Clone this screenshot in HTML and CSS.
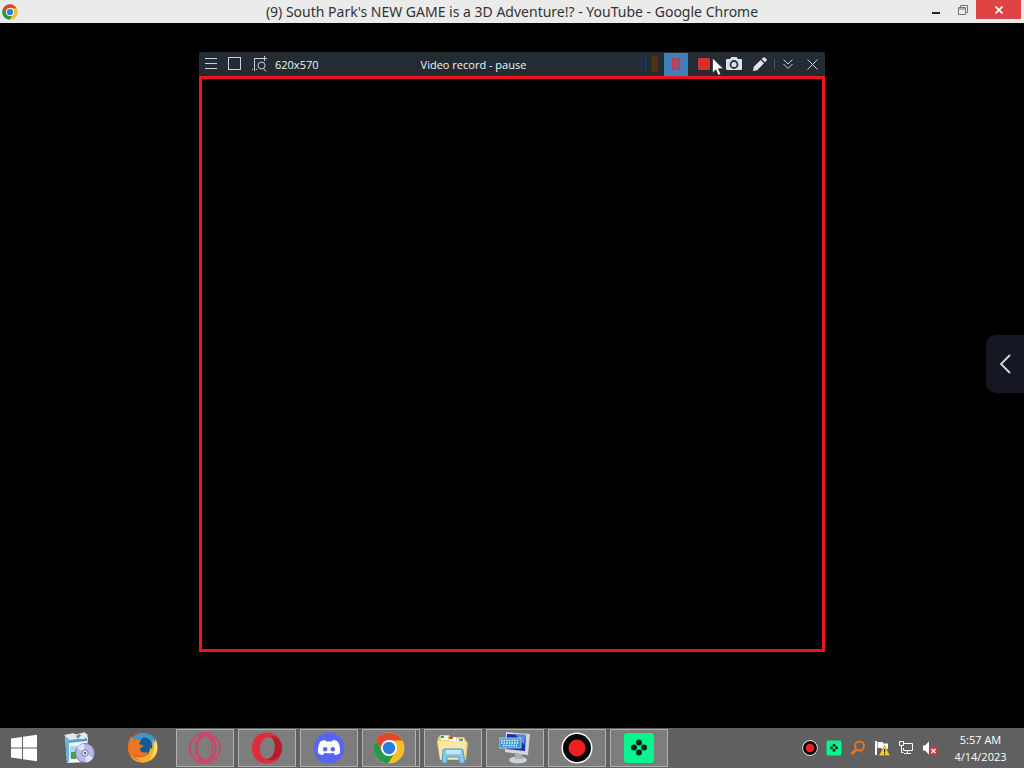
FILE: index.html
```html
<!DOCTYPE html>
<html lang="en">
<head>
<meta charset="utf-8">
<title>(9) South Park's NEW GAME is a 3D Adventure!? - YouTube - Google Chrome</title>
<link rel="stylesheet" href="styles.css">
</head>
<body>
<svg class="defs" aria-hidden="true">
  <defs>
    <symbol id="chrome" viewBox="0 0 32 32">
      <circle cx="16" cy="16" r="15.500" fill="#f6bf26"/>
      <path d="M2.600 8.200A15.500 15.500 0 0 1 29.400 8.500H16L9.500 19.500z" fill="#e04632"/>
      <path d="M2.600 8.200A15.500 15.500 0 0 0 15 31.500L22.500 19.700 9.500 19.700z" fill="#279847"/>
      <circle cx="16" cy="16" r="8" fill="#fff"/>
      <circle cx="16" cy="16" r="6.200" fill="#2b7be0"/>
    </symbol>
    <symbol id="record" viewBox="0 0 32 32">
      <circle cx="16" cy="16" r="15.500" fill="#fff"/>
      <circle cx="16" cy="16" r="14" fill="#050505"/>
      <circle cx="16" cy="16" r="8.500" fill="#ed2024"/>
    </symbol>
    <symbol id="gamepad" viewBox="0 0 32 32">
      <rect x="1" y="1" width="30" height="30" rx="3" fill="#07f58e"/>
      <g fill="#06251a"><circle cx="16" cy="10.500" r="3"/><circle cx="16" cy="20.500" r="3"/><circle cx="11" cy="15.500" r="3"/><circle cx="21" cy="15.500" r="3"/></g>
    </symbol>
  </defs>
</svg>
<div class="desktop">
  <header class="titlebar">
    <svg class="title-icon" aria-hidden="true"><use href="#chrome"/></svg>
    <h1 class="title">(9) South Park's NEW GAME is a 3D Adventure!? - YouTube - Google Chrome</h1>
    <div class="window-controls">
      <button class="win-btn" aria-label="Minimize"><svg width="10" height="12" viewBox="0 0 10 12"><path d="M1 8h8v2H1z" fill="#222"/></svg></button>
      <button class="win-btn" aria-label="Restore"><svg width="10" height="12" viewBox="0 0 10 12" fill="none" stroke="#777"><path d="M.5 3.500h7v7h-7zM.5 5h7M2.500 3V1.500h7v7H8"/></svg></button>
      <button class="win-btn win-close" aria-label="Close"><svg width="8" height="8" viewBox="0 0 8 8"><path d="M.5.5l7 7M7.500.5l-7 7" stroke="#fff" stroke-width="1.600"/></svg></button>
    </div>
  </header>

  <main class="stage">
    <section class="recorder">
      <div class="rec-bar">
        <div class="rec-left">
          <button class="rec-btn" aria-label="Menu"><svg width="14" height="14" viewBox="0 0 14 14"><path d="M1 1.500h12M1 6.500h12M1 11.500h12" stroke="#ccd2d7"/></svg></button>
          <button class="rec-btn" aria-label="Full screen"><svg width="14" height="14" viewBox="0 0 14 14"><rect x=".5" y=".5" width="12" height="12" fill="none" stroke="#ccd2d7"/></svg></button>
          <button class="rec-btn" aria-label="Select area"><svg width="16" height="16" viewBox="0 0 16 16" fill="none" stroke="#ccd2d7"><path d="M3.500 15V2.500H12M13.500 0v5M11 2.500h5M1 13.500h1M5 13.500h1"/><circle cx="10.500" cy="9.500" r="3.500"/><path d="M12.500 12.500l2.500 3"/></svg></button>
          <span class="rec-size">620x570</span>
        </div>
        <span class="rec-status">Video record - pause</span>
        <div class="rec-right">
          <svg class="meter" width="20" height="16" viewBox="0 0 20 16" aria-hidden="true"><path d="M1.500.5h4v15h-4z" fill="#192c43" stroke="#223b58"/><path d="M12.500.5h5v15h-5z" fill="#493018" stroke="#553817"/></svg>
          <button class="rec-btn rec-pause" aria-label="Pause"><svg width="8" height="12" viewBox="0 0 8 12"><path d="M0 0h3.500v12H0zM4.500 0H8v12H4.500z" fill="#c43b4d"/></svg></button>
          <button class="rec-btn rec-stop" aria-label="Stop"><svg width="12" height="12" viewBox="0 0 12 12"><path d="M0 0h12v12H0z" fill="#dc2f29"/></svg></button>
          <button class="rec-btn rec-camera" aria-label="Screenshot"><svg width="16" height="14" viewBox="0 0 16 14"><path d="M1 2h3l1.500-2h5L12 2h3q1 0 1 1v9q0 1-1 1H1q-1 0-1-1V3q0-1 1-1z" fill="#dce1eb"/><circle cx="8" cy="7.500" r="3.500" fill="none" stroke="#27323a" stroke-width="1.800"/></svg></button>
          <button class="rec-btn rec-draw" aria-label="Draw"><svg width="14" height="14" viewBox="0 0 14 14"><path d="M0 14l.7-4.200L7.700 3 11 6.300 4.200 13.300zM8.700 2L10 .7q1-1 2 0l1.300 1.300q1 1 0 2L12 5.300z" fill="#e3e5f0"/></svg></button>
          <span class="rec-sep"></span>
          <button class="rec-btn" aria-label="Collapse"><svg width="10" height="12" viewBox="0 0 10 12"><path d="M.5 1.500L5 6l4.500-4.500M.5 6L5 10.500 9.500 6" fill="none" stroke="#ccd2d7"/></svg></button>
          <button class="rec-btn" aria-label="Close recorder"><svg width="11" height="11" viewBox="0 0 11 11"><path d="M.5.5l10 10M10.500.5l-10 10" stroke="#ccd2d7"/></svg></button>
        </div>
        <svg class="cursor" width="12" height="19" viewBox="0 0 12 19" aria-hidden="true"><path d="M.5 1v15l3.300-3.300 2.400 5.600 2.600-1.100-2.400-5.500h5z" fill="#fff" stroke="#222" stroke-width=".7"/></svg>
      </div>
      <div class="rec-frame"></div>
    </section>
    <button class="side-tab" aria-label="Open side panel"><svg width="12" height="22" viewBox="0 0 12 22"><path d="M11 2L2 11l9 9" fill="none" stroke="#d6d7dc" stroke-width="1.800"/></svg></button>
  </main>

  <footer class="taskbar">
    <button class="start" aria-label="Start"><svg width="28" height="28" viewBox="0 0 28 28" fill="#fff"><path d="M1 4.500l11-1.500v10.500H1zM13 2.800L27 .7v12.800H13zM1 14.500h11V25L1 23.500zM13 14.500h14v12.800l-14-2.100z"/></svg></button>
    <nav class="apps" aria-label="Applications">
      <button class="pin" aria-label="Installer"><svg class="app-icon" viewBox="0 0 32 32"><path d="M2 4l18-3 5 4-2 25L4 31z" fill="#eef3f6"/><path d="M2 4l4 3v23l-2 1z" fill="#72afd8"/><path d="M6 8l18-2v3L6 11z" fill="#5c9bcd"/><path d="M1 3l10-2 2 4 8-5 4 3-4 4H6z" fill="#dce9f1"/><path d="M13 4l3-2 2 1-3 4z" fill="#7b8798"/><path d="M7 14h12v12H7z" fill="#a7d8e8"/><path d="M8 20h5v7H8z" fill="#45a44b"/><path d="M13 16h5v10h-5z" fill="#eac25a"/><circle cx="22" cy="21" r="9.500" fill="#b8b8e9" stroke="#7477af"/><path d="M22 21l-8-5a9.500 9.500 0 0 1 7-4.500zM22 21l8 5a9.500 9.500 0 0 1-7 4.500z" fill="#e1e0fa"/><circle cx="22" cy="21" r="3.200" fill="#edf1ff" stroke="#7176a9"/><circle cx="22" cy="21" r="1.300" fill="#596080"/></svg></button>
      <button class="pin" aria-label="Firefox"><svg class="app-icon" viewBox="0 0 32 32"><circle cx="16" cy="16" r="15" fill="#e66322"/><path d="M6 6Q10 1 17 1.200C26 1.500 31 8 30.500 16L25 23 15 21 7 14z" fill="#3d97cb"/><path d="M15 6c4-2 11 2 10 10l-4 6-6-1-4-7z" fill="#14598f"/><path d="M28 6c4 8 3 17-4 22-8 5-18 2-21-5 10 5 20 2 20-7l2 1c1-4 1-6 0-9l3 2z" fill="#f6ad32"/><path d="M29 9c3 8 0 16-7 19 4-5 6-10 5-16z" fill="#fbe368"/><path d="M4 4l3 4 6 0-1 4 5 2-5 3c1 4 5 4 9 3-3 5-11 5-14 0 0 4 3 8 8 9C5 29-2 19 2 9z" fill="#ee7426"/></svg></button>
      <button class="task" aria-label="Opera GX"><svg class="app-icon" viewBox="0 0 32 32" fill="none" stroke="#e03a66" stroke-width="1.500"><circle cx="16" cy="16" r="15"/><ellipse cx="16" cy="16" rx="8" ry="12.500"/><path d="M20 1.500C2 1 2 31 20 30.500M20 3.500c9 5 9 20 0 25"/></svg></button>
      <button class="task" aria-label="Opera"><svg class="app-icon" viewBox="0 0 32 32"><path fill-rule="evenodd" d="M16 .5C7 .5 1 7 1 16s6 15.500 15 15.500S31 25 31 16 25 .5 16 .5zM18 5c4 0 6 5 6 10s-3 12-8 12-7-5-7-11S13 5 18 5z" fill="#e22b3a"/><path d="M18 5c4 0 6 5 6 10s-3 12-8 12q-3 0-5-3c8 8 20 4 20-8 0-9-7-14-13-11z" fill="#b71d2c"/></svg></button>
      <button class="task" aria-label="Discord"><svg class="app-icon" viewBox="0 0 32 32"><circle cx="16" cy="16" r="15.500" fill="#5865f2"/><path fill-rule="evenodd" d="M12 8l1 1.500h6L20 8c3 .3 4 1 5 2 2 4 2.500 7 2 11-2 1.500-4 2-5 2l-1.500-2.300q-4.500 1.300-9 0L10 23c-2 0-4-1-5-2-.3-4 0-7 2-11 1-1 3-1.700 5-2zm.2 7c-3 0-3 4.500 0 4.500s3-4.500 0-4.500zm7.600 0c-3 0-3 4.500 0 4.500s3-4.500 0-4.500z" fill="#fff"/></svg></button>
      <button class="task task-stack" aria-label="Google Chrome"><svg class="app-icon"><use href="#chrome"/></svg></button>
      <button class="task" aria-label="File Explorer"><svg class="app-icon" viewBox="0 0 32 32"><path d="M1 6l2-3h9l2 3h2l2-1h9l2 4 2 2-2 17H3L0 10z" fill="#e5cf78"/><path d="M4 4h7v4H4zM12 5h7v4h-7zM20 7h7v3h-7z" fill="#fff"/><path d="M4 4h3v2H4z" fill="#35a94a"/><path d="M12 5h4v2h-4z" fill="#e24628"/><path d="M22 7h4v2h-4z" fill="#4d94cf"/><path d="M1 9h28l-1 18H3z" fill="#f7e9a4"/><path d="M5 31l1-13q0-1 2-1h16q2 0 2 1l2 13h-6v-6H10v6z" fill="#86c6ea" stroke="#5299c6"/><path d="M9 18h15v4H9z" fill="#c2e7f7"/></svg></button>
      <button class="task" aria-label="On-screen keyboard"><svg class="app-icon" viewBox="0 0 32 32"><ellipse cx="19" cy="28" rx="9" ry="3.500" fill="#cfd2d4"/><path d="M16 22h7l1 5h-8z" fill="#a7adb2"/><path d="M7 0l24 2-2 21-23-3z" fill="#d2d7dc"/><path d="M8 2l19 1-1 16-19-2z" fill="#1634a5"/><path d="M16 2l11 1-2 10z" fill="#6187d9"/><path d="M0 6h22v10H0z" fill="#3a96d4" stroke="#d2edfc" stroke-width=".7"/><path d="M2 8.500h18M2 11h18M4 13.500h14" stroke="#e4f5fc" stroke-width="1.300" stroke-dasharray="1.600 1"/></svg></button>
      <button class="task" aria-label="Screen recorder"><svg class="app-icon"><use href="#record"/></svg></button>
      <button class="task" aria-label="Game launcher"><svg class="app-icon"><use href="#gamepad"/></svg></button>
    </nav>
    <div class="tray">
      <button class="tray-btn" aria-label="Recorder"><svg class="tray-icon"><use href="#record"/></svg></button>
      <button class="tray-btn" aria-label="Games"><svg class="tray-icon"><use href="#gamepad"/></svg></button>
      <button class="tray-btn" aria-label="Search"><svg class="tray-icon" viewBox="0 0 16 16" fill="none" stroke="#e9741b"><circle cx="9.500" cy="6" r="4.500" stroke-width="2"/><path d="M6.500 9.500L1.500 14" stroke-width="3"/><path d="M10 11.500l4 1" stroke="#b9601f"/></svg></button>
      <button class="tray-btn" aria-label="Action Center"><svg class="tray-icon" viewBox="0 0 16 16"><path d="M1 1h2v14H1zM3.500 2h5l1 1.500H14V9H8L7 8H3.500z" fill="#fff"/><path d="M10.500 5.500L16 15.500H5z" fill="#f4cf2b" stroke="#8d7818" stroke-width=".5"/><path d="M10 9h1.200v3.500H10zM10 13.300h1.200v1.200H10z" fill="#222"/></svg></button>
      <button class="tray-btn" aria-label="Network"><svg class="tray-icon" viewBox="0 0 16 16" fill="none" stroke="#fff"><path d="M6 3.500h8.500v7H5.500V8M9.500 11v2.500M6 13.500h7M1.500 1.500h4v4h-4zM3.500 6v6.500h2"/></svg></button>
      <button class="tray-btn" aria-label="Volume muted"><svg class="tray-icon" viewBox="0 0 16 16"><path d="M1 5.500h2l4-4v13l-4-4H1z" fill="#fff"/><circle cx="11.500" cy="11" r="4.500" fill="#d5353b"/><path d="M9.500 9l4 4M13.500 9l-4 4" stroke="#fff" stroke-width="1.300"/></svg></button>
    </div>
    <time class="clock" datetime="2023-04-14T05:57"><span>5:57 AM</span><span>4/14/2023</span></time>
  </footer>
</div>
</body>
</html>
```
FILE: styles.css
```css
* {
  box-sizing: border-box;
}

body {
  margin: 0;
  background: #000;
  font-family: "Open Sans", "Noto Sans", sans-serif;
}

button {
  display: flex;
  align-items: center;
  justify-content: center;
  padding: 0;
  border: 0;
  background: none;
  font: inherit;
}

svg {
  display: block;
  flex: none;
}

.defs {
  position: absolute;
  width: 0;
  height: 0;
}

.desktop {
  display: flex;
  flex-direction: column;
  min-height: 100vh;
}

/* Browser title bar */
.titlebar {
  display: grid;
  grid-template-columns: 1fr auto 1fr;
  align-items: center;
  height: 23px;
  background: #ebebeb;
}

.title-icon {
  width: 16px;
  height: 16px;
  margin-left: 2px;
}

.title {
  margin: 0;
  color: #333;
  font-family: "Noto Sans", "Open Sans", sans-serif;
  font-size: 14px;
  font-weight: 400;
  line-height: 23px;
  white-space: nowrap;
}

.window-controls {
  display: flex;
  align-self: start;
  justify-content: flex-end;
  padding-right: 3px;
}

.win-btn {
  width: 27px;
  height: 19px;
}

.win-close {
  width: 45px;
  background: #e04343;
}

/* Black video area holding the recorder window */
.stage {
  position: relative;
  display: flex;
  flex: 1;
  justify-content: center;
  padding: 29px 0 76px;
}

.recorder {
  display: flex;
  flex-direction: column;
  width: 626px;
}

.rec-bar {
  position: relative;
  display: grid;
  grid-template-columns: 1fr auto 1fr;
  align-items: center;
  height: 24px;
  padding-right: 1px;
  background: #232c33;
  color: #f2f4f5;
  font-size: 11px;
}

.rec-left,
.rec-right {
  display: flex;
  align-items: center;
}

.rec-right {
  justify-content: flex-end;
}

.rec-btn {
  width: 24px;
  height: 23px;
}

.rec-size {
  margin-left: 4px;
}

.rec-status {
  padding-right: 76px;
}

.rec-pause {
  margin-left: 4px;
  background: #427fbd;
}

.rec-stop {
  width: 32px;
}

.rec-camera {
  width: 28px;
}

.rec-sep {
  width: 1px;
  height: 10px;
  margin: 0 1px 0 2px;
  background: #4a545b;
}

.cursor {
  position: absolute;
  top: 5px;
  right: 101px;
}

.rec-frame {
  flex: 1;
  border: 3px solid #ed151b;
}

.side-tab {
  position: absolute;
  top: 312px;
  right: 0;
  width: 38px;
  height: 58px;
  border-radius: 10px 0 0 10px;
  background: #151723;
}

/* Taskbar */
.taskbar {
  display: flex;
  align-items: center;
  height: 40px;
  background: #606060;
}

.start {
  width: 48px;
  height: 40px;
}

.apps {
  display: flex;
  flex: 1;
  gap: 4px;
}

.pin,
.task {
  width: 58px;
  height: 38px;
}

.pin {
  margin-left: 2px;
}

.task {
  border: 1px solid #b0b0b0;
  background: #7d7d7d;
}

.task-stack {
  padding-right: 4px;
  box-shadow: inset -3px 0 #666, inset -4px 0 #b0b0b0;
}

.app-icon {
  width: 32px;
  height: 32px;
}

.tray {
  display: flex;
}

.tray-btn {
  width: 24px;
  height: 24px;
}

.tray-icon {
  width: 16px;
  height: 16px;
}

.clock {
  display: flex;
  flex-direction: column;
  align-items: center;
  width: 82px;
  padding-right: 5px;
  color: #fff;
  font-size: 11px;
  line-height: 17px;
}
```
